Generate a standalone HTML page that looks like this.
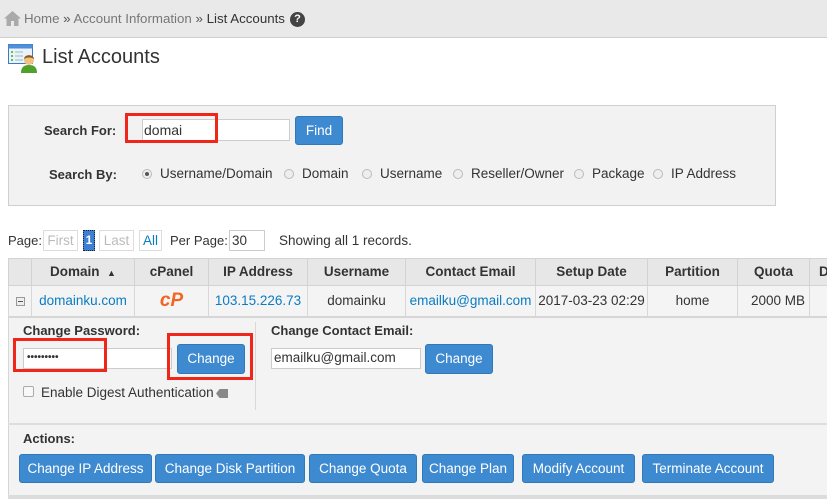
<!DOCTYPE html>
<html><head><meta charset="utf-8"><style>
*{box-sizing:border-box;margin:0;padding:0}
body{width:827px;height:499px;overflow:hidden;background:#fff;font-family:"Liberation Sans",sans-serif;font-size:13.5px;color:#333;position:relative}
.a{position:absolute;white-space:nowrap}
.btn{position:absolute;background:#3e8ad0;border:1px solid #2f78ba;border-radius:3px;color:#fff;text-align:center;font-size:13.5px}
.inp{position:absolute;background:#fff;border:1px solid #ccc}
.red{position:absolute;border:3px solid #f0261b}
.rad{position:absolute;width:10px;height:10px;border:1px solid #bbb;border-radius:50%;background:#eee}
.b{font-weight:bold}
.lk{color:#0a7cc2}
.th{position:absolute;top:258px;height:28px;line-height:28px;font-weight:bold;text-align:center;border-right:1px solid #d3d3d3}
.td{position:absolute;top:286px;height:30px;line-height:30px;text-align:center;border-right:1px solid #d8d8d8}
</style></head><body>
<div class="a" style="left:0;top:0;width:827px;height:38px;background:#e9e9e9;border-bottom:1px solid #cfcfcf"></div>
<svg class="a" style="left:4px;top:11px" width="17" height="15" viewBox="0 0 17 15"><path d="M8.5 0L0 7.5h2.5V15h4.5v-5h3v5h4.5V7.5H17z" fill="#aaa"/></svg>
<div class="a" style="left:24px;top:11px;font-size:13.3px;color:#777">Home <span style="color:#555">»</span> Account Information <span style="color:#555">»</span> <span style="color:#333">List Accounts</span></div>
<div class="a" style="left:290px;top:12px;width:15px;height:15px;border-radius:50%;background:#444;color:#fff;font-size:11px;font-weight:bold;text-align:center;line-height:15px">?</div>

<svg class="a" style="left:8px;top:44px" width="30" height="30" viewBox="0 0 30 30"><rect x="0.5" y="0.5" width="24" height="19" fill="#eaf2fb" stroke="#3a7bc8"/><rect x="0.5" y="0.5" width="24" height="4" fill="#4d8fd8"/><g fill="#6bbf3a"><rect x="3" y="7" width="2" height="2"/><rect x="3" y="11" width="2" height="2"/><rect x="3" y="15" width="2" height="2"/></g><g stroke="#9bb" ><line x1="7" y1="8" x2="15" y2="8"/><line x1="7" y1="12" x2="15" y2="12"/><line x1="7" y1="16" x2="15" y2="16"/></g><path d="M13 29c0-6 3-8 8-8s8 2 8 8z" fill="#4fa12c"/><circle cx="21" cy="16" r="5" fill="#f2c080"/><path d="M16 15c0-5 10-5 10 0c-2-2-8-2-10 0z" fill="#8a5a1c"/></svg>
<div class="a" style="left:42px;top:46px;font-size:20px;color:#333">List Accounts</div>

<div class="a" style="left:8px;top:105px;width:768px;height:101px;background:#f2f2f2;border:1px solid #cfcfcf"></div>
<div class="a b" style="left:44px;top:123px;font-size:13px">Search For:</div>
<div class="inp" style="left:142px;top:119px;width:148px;height:22px"></div>
<div class="a" style="left:144px;top:122px;font-size:14px">domai</div>
<div class="red" style="left:125px;top:113px;width:93px;height:30px"></div>
<div class="btn" style="left:295px;top:116px;width:48px;height:29px;line-height:27px">Find</div>
<div class="a b" style="left:49px;top:167px;font-size:13px">Search By:</div>
<div class="rad" style="left:142px;top:169px"><div style="width:4px;height:4px;background:#555;border-radius:50%;margin:2px"></div></div>
<div class="a" style="left:160px;top:166px">Username/Domain</div>
<div class="rad" style="left:284px;top:169px"></div><div class="a" style="left:302px;top:166px">Domain</div>
<div class="rad" style="left:362px;top:169px"></div><div class="a" style="left:380px;top:166px">Username</div>
<div class="rad" style="left:453px;top:169px"></div><div class="a" style="left:471px;top:166px">Reseller/Owner</div>
<div class="rad" style="left:574px;top:169px"></div><div class="a" style="left:592px;top:166px">Package</div>
<div class="rad" style="left:653px;top:169px"></div><div class="a" style="left:671px;top:166px">IP Address</div>

<div class="a" style="left:8px;top:233px;font-size:13px">Page:</div>
<div class="a" style="left:43px;top:230px;width:35px;height:21px;border:1px solid #ddd;color:#bbb;text-align:center;line-height:19px">First</div>
<div class="a" style="left:83px;top:230px;width:12px;height:21px;background:#3e7fd6;border:1px dotted #222;color:#fff;text-align:center;line-height:19px;font-size:12px;font-weight:bold">1</div>
<div class="a" style="left:99px;top:230px;width:35px;height:21px;border:1px solid #ddd;color:#bbb;text-align:center;line-height:19px">Last</div>
<div class="a lk" style="left:139px;top:230px;width:23px;height:21px;border:1px solid #ddd;text-align:center;line-height:19px">All</div>
<div class="a" style="left:170px;top:233px;font-size:13px">Per Page:</div>
<div class="inp" style="left:229px;top:230px;width:36px;height:21px;padding:2px 0 0 2px">30</div>
<div class="a" style="left:279px;top:233px">Showing all 1 records.</div>

<div class="a" style="left:8px;top:258px;width:819px;height:28px;background:#e7e7e7;border-top:1px solid #d3d3d3;border-bottom:1px solid #d3d3d3"></div>
<div class="a" style="left:8px;top:286px;width:819px;height:32px;background:#f4f4f4;border-bottom:2px solid #d6d6d6"></div>
<div class="th" style="left:8px;width:24px;border-left:1px solid #d3d3d3"></div>
<div class="th" style="left:32px;width:103px">Domain &nbsp;<span style="font-size:9px">▲</span></div>
<div class="th" style="left:135px;width:74px">cPanel</div>
<div class="th" style="left:209px;width:99px">IP Address</div>
<div class="th" style="left:308px;width:98px">Username</div>
<div class="th" style="left:406px;width:130px">Contact Email</div>
<div class="th" style="left:536px;width:112px">Setup Date</div>
<div class="th" style="left:648px;width:90px">Partition</div>
<div class="th" style="left:738px;width:72px">Quota</div>
<div class="th" style="left:810px;width:30px;text-align:left;padding-left:9px">D</div>
<div class="td" style="left:8px;width:24px;border-left:1px solid #d8d8d8"><div style="width:9px;height:9px;border:1px solid #999;margin:11px auto;background:#eee;position:relative"><div style="position:absolute;left:1px;top:3px;width:5px;height:1px;background:#555"></div></div></div>
<div class="td lk" style="left:32px;width:103px">domainku.com</div>
<div class="td" style="left:135px;width:74px;color:#f26522;font-weight:bold;font-style:italic;font-size:19px">cP</div>
<div class="td lk" style="left:209px;width:99px">103.15.226.73</div>
<div class="td" style="left:308px;width:98px">domainku</div>
<div class="td lk" style="left:406px;width:130px">emailku@gmail.com</div>
<div class="td" style="left:536px;width:112px">2017-03-23 02:29</div>
<div class="td" style="left:648px;width:90px">home</div>
<div class="td" style="left:738px;width:72px;text-align:right;padding-right:4px">2000 MB</div>
<div class="td" style="left:810px;width:30px"></div>

<div class="a" style="left:8px;top:318px;width:819px;height:181px;background:#f3f3f3;border-left:1px solid #d6d6d6"></div>
<div class="a b" style="left:23px;top:323px;font-size:13px">Change Password:</div>
<div class="inp" style="left:23px;top:348px;width:149px;height:21px;padding-left:3px;line-height:18px;font-size:10px;font-weight:bold;letter-spacing:0px">•••••••••</div>
<div class="red" style="left:13px;top:338px;width:94px;height:34px"></div>
<div class="btn" style="left:177px;top:344px;width:68px;height:30px;line-height:28px">Change</div>
<div class="red" style="left:167px;top:333px;width:86px;height:47px"></div>
<div class="a" style="left:255px;top:322px;width:1px;height:88px;background:#d8d8d8"></div>
<div class="a b" style="left:271px;top:323px;font-size:13px">Change Contact Email:</div>
<div class="inp" style="left:271px;top:348px;width:150px;height:21px;padding:1px 0 0 2px">emailku@gmail.com</div>
<div class="btn" style="left:425px;top:344px;width:68px;height:30px;line-height:28px">Change</div>
<div class="a" style="left:23px;top:386px;width:11px;height:11px;border:1px solid #aaa;border-radius:2px;background:#f8f8f8"></div>
<div class="a" style="left:41px;top:385px">Enable Digest Authentication</div>
<div class="a" style="left:216px;top:389px;width:12px;height:9px;background:#888;clip-path:polygon(30% 0,100% 0,100% 100%,30% 100%,0 50%)"></div>
<div class="a" style="left:8px;top:423px;width:819px;height:2px;background:#ddd"></div>
<div class="a b" style="left:23px;top:431px;font-size:13px">Actions:</div>
<div class="btn" style="left:19px;top:454px;width:133px;height:29px;line-height:27px">Change IP Address</div>
<div class="btn" style="left:155px;top:454px;width:150px;height:29px;line-height:27px">Change Disk Partition</div>
<div class="btn" style="left:309px;top:454px;width:108px;height:29px;line-height:27px">Change Quota</div>
<div class="btn" style="left:422px;top:454px;width:92px;height:29px;line-height:27px">Change Plan</div>
<div class="btn" style="left:522px;top:454px;width:113px;height:29px;line-height:27px">Modify Account</div>
<div class="btn" style="left:642px;top:454px;width:132px;height:29px;line-height:27px">Terminate Account</div>
<div class="a" style="left:8px;top:495px;width:819px;height:4px;background:#dcdcdc"></div>
</body></html>
